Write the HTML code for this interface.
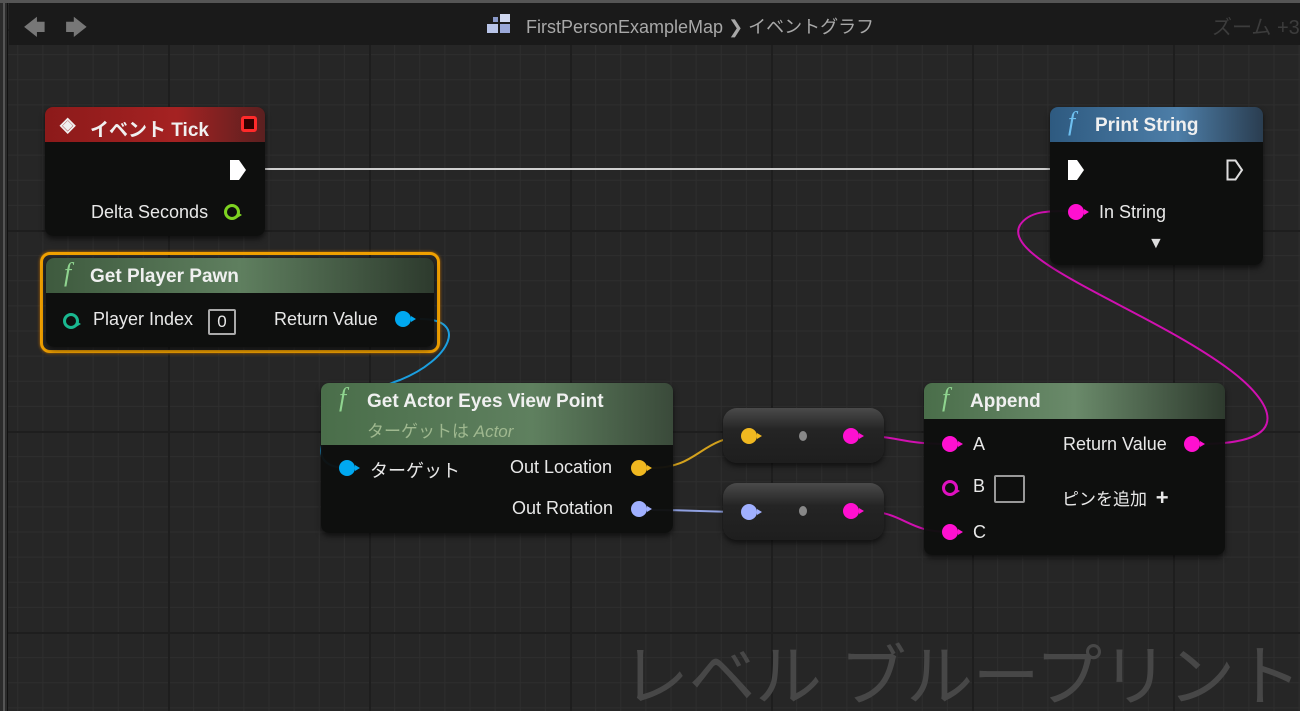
<!DOCTYPE html>
<html><head><meta charset="utf-8"><style>
*{margin:0;padding:0;box-sizing:border-box}
html{width:1300px;height:711px;overflow:hidden}
body{width:1300px;height:711px;overflow:hidden;background:#262626;font-family:"Liberation Sans","Noto Sans CJK JP",sans-serif;position:relative}
#grid{position:absolute;left:0;top:0;width:1300px;height:711px;
background-image:
linear-gradient(to right,#1e1e1e 0,#1e1e1e 2px,transparent 2px),
linear-gradient(to bottom,#1e1e1e 0,#1e1e1e 2px,transparent 2px),
linear-gradient(to right,#2e2e2e 0,#2e2e2e 1px,transparent 1px),
linear-gradient(to bottom,#2e2e2e 0,#2e2e2e 1px,transparent 1px);
background-size:201px 201px,201px 201px,25.125px 25.125px,25.125px 25.125px;
background-position:168px 29px,168px 29px,168px 29px,168px 29px}
#frameL{position:absolute;left:0;top:0;width:8px;height:711px;background:#2b2b2b;border-right:1px solid #111}
#frameL:after{content:"";position:absolute;left:3px;top:0;width:2px;height:711px;background:#555}
#frameT{position:absolute;left:0;top:0;width:1300px;height:3px;background:#555}
#bar{position:absolute;left:9px;top:3px;width:1291px;height:42px;background:#1a1a1a;color:#a8a8a8;font-size:18px}
.node{position:absolute;background:rgba(14,15,14,0.96);border-radius:8px;box-shadow:0 3px 6px rgba(0,0,0,.6);color:#e8e8e8;font-size:18px}
.hd{position:absolute;left:0;top:0;right:0;border-radius:8px 8px 0 0;font-weight:bold;font-size:19px;color:#f0f0f0;padding-left:18px}
.t{position:absolute;white-space:nowrap}
.f{font-family:"Liberation Serif",serif;font-style:italic;font-size:26px;font-weight:normal;color:#8fd48f}
.pin{position:absolute;width:16px;height:16px;border-radius:50%}
.pin:after{content:"";position:absolute;right:-5px;top:5px;border-left:5px solid;border-left-color:inherit;border-top:3px solid transparent;border-bottom:3px solid transparent}
</style></head><body>
<div id="grid"></div>
<svg width="1300" height="711" style="position:absolute;left:0;top:0">
<path d="M265 169 L1050 169" stroke="#cfcfcf" stroke-width="2" fill="none"/>
<path d="M420 319 C470 319 450 360 400 380 C340 400 290 465 345 468" stroke="#1b9fe0" stroke-width="2" fill="none"/>
<path d="M652 468 C700 468 700 436 750 436" stroke="#d4a21d" stroke-width="2" fill="none"/>
<path d="M652 510 C700 510 700 512 750 512" stroke="#8fa0e0" stroke-width="2" fill="none"/>
<path d="M862 436 C900 436 900 444 950 444" stroke="#d010b0" stroke-width="2" fill="none"/>
<path d="M862 511 C905 511 905 532 950 532" stroke="#d010b0" stroke-width="2" fill="none"/>
<path d="M1200 444 C1300 444 1270 400 1230 370 C1150 310 1000 260 1020 225 C1030 210 1050 211 1075 211" stroke="#d010b0" stroke-width="2" fill="none"/>
</svg>
<div id="frameL"></div><div id="frameT"></div>
<div id="bar">
<span class="t" style="left:14px;top:8px;font-size:22px;color:#777">🡄</span>
<span class="t" style="left:56px;top:8px;font-size:22px;color:#777">🡆</span>
<svg style="position:absolute;left:478px;top:11px" width="26" height="22"><rect x="0" y="10" width="11" height="9" fill="#b8c4e8"/><rect x="13" y="0" width="10" height="8" fill="#d0d8f0"/><rect x="13" y="10" width="10" height="9" fill="#9aa8d8"/><rect x="6" y="3" width="5" height="5" fill="#8898c8"/></svg>
<span class="t" style="left:517px;top:10px">FirstPersonExampleMap ❯ イベントグラフ</span>
<span class="t" style="left:1203px;top:8px;font-size:20px;color:#3c3c3c">ズーム +3</span>
</div>

<div class="node" style="left:45px;top:107px;width:220px;height:129px">
<div class="hd" style="height:35px;background:linear-gradient(90deg,#8c1a1a,#a52222 60%,#5a2020)">
<span class="t" style="left:15px;top:5px;font-size:20px">◈</span>
<span class="t" style="left:45px;top:8px">イベント Tick</span>
<span style="position:absolute;right:8px;top:9px;width:16px;height:16px;border:3px solid #ff2a2a;background:#300;border-radius:3px"></span></div>
<svg style="position:absolute;left:184px;top:52px" width="18" height="22"><path d="M1 1 H10 L17 11 L10 21 H1 Z" fill="#fff"/></svg>
<span class="t" style="left:46px;top:95px">Delta Seconds</span>
<div class="pin" style="left:179px;top:97px;border:3px solid #7ed321;border-left-color:#7ed321"></div>
</div>

<div style="position:absolute;left:40px;top:252px;width:400px;height:101px;border:3px solid #f0a000;border-radius:10px;box-shadow:0 0 3px #c07000"></div>
<div class="node" style="left:46px;top:258px;width:388px;height:89px">
<div class="hd" style="height:35px;background:linear-gradient(90deg,#3e5a3e,#5f7f5f 50%,#2d3a2d)">
<span class="t f" style="left:18px;top:0">f</span><span class="t" style="left:44px;top:8px">Get Player Pawn</span></div>
<div class="pin" style="left:17px;top:55px;border:3px solid #1ab890;border-left-color:#1ab890"></div>
<span class="t" style="left:47px;top:51px">Player Index</span>
<span style="position:absolute;left:162px;top:51px;width:28px;height:26px;border:2px solid #aaa;border-radius:2px;text-align:center;font-size:17px;line-height:22px">0</span>
<span class="t" style="left:228px;top:51px">Return Value</span>
<div class="pin" style="left:349px;top:53px;background:#00a8f0;border-color:#00a8f0"></div>
</div>

<div class="node" style="left:1050px;top:107px;width:213px;height:158px">
<div class="hd" style="height:35px;background:linear-gradient(90deg,#2e5a80,#4d7ea8 60%,#2a3d50)">
<span class="t f" style="left:18px;top:0;color:#6ec0f0">f</span><span class="t" style="left:45px;top:8px">Print String</span></div>
<svg style="position:absolute;left:17px;top:52px" width="18" height="22"><path d="M1 1 H10 L17 11 L10 21 H1 Z" fill="#fff"/></svg>
<svg style="position:absolute;left:176px;top:52px" width="18" height="22"><path d="M1.5 1.5 H9.5 L16 11 L9.5 20.5 H1.5 Z" fill="none" stroke="#ddd" stroke-width="2"/></svg>
<div class="pin" style="left:18px;top:97px;background:#ff10d0;border-color:#ff10d0"></div>
<span class="t" style="left:49px;top:95px">In String</span>
<span class="t" style="left:98px;top:128px;font-size:16px;color:#ddd">▼</span>
</div>

<div class="node" style="left:321px;top:383px;width:352px;height:150px">
<div class="hd" style="height:62px;background:linear-gradient(90deg,#4a6e4a,#5f805f 60%,#3a4a3a)">
<span class="t f" style="left:18px;top:0">f</span><span class="t" style="left:46px;top:8px">Get Actor Eyes View Point</span>
<span class="t" style="left:46px;top:34px;font-weight:normal;font-size:17px;color:#9fb88f">ターゲットは <i>Actor</i></span></div>
<div class="pin" style="left:18px;top:77px;background:#00a8f0;border-color:#00a8f0"></div>
<span class="t" style="left:49px;top:74px">ターゲット</span>
<span class="t" style="left:189px;top:74px">Out Location</span>
<div class="pin" style="left:310px;top:77px;background:#f0b820;border-color:#f0b820"></div>
<span class="t" style="left:191px;top:115px">Out Rotation</span>
<div class="pin" style="left:310px;top:118px;background:#a0b0ff;border-color:#a0b0ff"></div>
</div>

<div class="node" style="left:723px;top:408px;width:161px;height:55px;border-radius:14px;background:linear-gradient(#4a4a4a,#242424 40%,#1e1e1e)">
<div class="pin" style="left:18px;top:20px;background:#f0b820;border-color:#f0b820"></div>
<div style="position:absolute;left:76px;top:23px;width:8px;height:10px;border-radius:50%;background:#888"></div>
<div class="pin" style="left:120px;top:20px;background:#ff10d0;border-color:#ff10d0"></div>
</div>
<div class="node" style="left:723px;top:483px;width:161px;height:57px;border-radius:14px;background:linear-gradient(#4a4a4a,#242424 40%,#1e1e1e)">
<div class="pin" style="left:18px;top:21px;background:#a0b0ff;border-color:#a0b0ff"></div>
<div style="position:absolute;left:76px;top:23px;width:8px;height:10px;border-radius:50%;background:#888"></div>
<div class="pin" style="left:120px;top:20px;background:#ff10d0;border-color:#ff10d0"></div>
</div>

<div class="node" style="left:924px;top:383px;width:301px;height:172px">
<div class="hd" style="height:36px;background:linear-gradient(90deg,#4a6e4a,#6a8a6a 50%,#2e3a2e)">
<span class="t f" style="left:18px;top:0">f</span><span class="t" style="left:46px;top:8px">Append</span></div>
<div class="pin" style="left:18px;top:53px;background:#ff10d0;border-color:#ff10d0"></div>
<span class="t" style="left:49px;top:51px">A</span>
<span class="t" style="left:139px;top:51px">Return Value</span>
<div class="pin" style="left:260px;top:53px;background:#ff10d0;border-color:#ff10d0"></div>
<div class="pin" style="left:18px;top:97px;border:3px solid #e010c0;border-left-color:#e010c0"></div>
<span class="t" style="left:49px;top:93px">B</span>
<span style="position:absolute;left:70px;top:92px;width:31px;height:28px;border:2px solid #999;border-radius:2px"></span>
<span class="t" style="left:138px;top:102px;font-size:17px">ピンを追加 <b style="font-size:22px;margin-left:4px">+</b></span>
<div class="pin" style="left:18px;top:141px;background:#ff10d0;border-color:#ff10d0"></div>
<span class="t" style="left:49px;top:139px">C</span>
</div>

<div class="t" style="left:622px;top:638px;font-size:67px;line-height:80px;color:#474747;letter-spacing:-0.5px">レベル ブループリント</div>
</body></html>
